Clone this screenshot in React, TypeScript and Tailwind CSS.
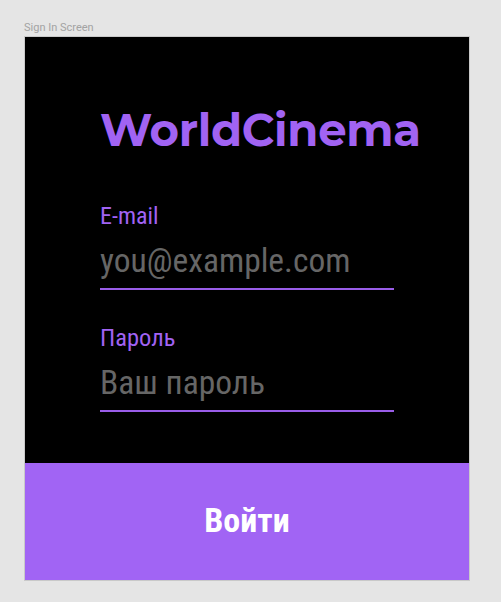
export default function App() {
  const cond = { fontFamily: '"Roboto Condensed", "Liberation Sans Narrow", Roboto, sans-serif' };
  return (
    <div className="w-[501px] h-[602px] bg-[#e5e5e5] pt-[21px] pl-[24px]" style={{ fontFamily: 'Roboto, sans-serif' }}>
      <div className="text-[11px] leading-[14px] text-[#a3a3a3] mb-[1px]">Sign In Screen</div>
      <div className="w-[446px] h-[545px] flex flex-col bg-black border border-[#c9c9c9]">
        <div className="flex-1 flex flex-col pl-[75px] pt-[65px]">
          <div
            className="text-[45px] leading-[56px] font-bold text-[#a163f3] tracking-[-0.3px]"
            style={{ fontFamily: 'Montserrat, Lato, "Open Sans", sans-serif' }}
          >
            WorldCinema
          </div>
          <div className="mt-[44px] w-[294px]" style={cond}>
            <div className="text-[24px] leading-[28px] text-[#a163f3]">E-mail</div>
            <div className="text-[33.5px] leading-[40px] text-[#666666] mt-[11px]">you@example.com</div>
            <div className="h-[2px] bg-[#9a5de8] mt-[7px]"></div>
          </div>
          <div className="mt-[34px] w-[294px]" style={cond}>
            <div className="text-[24.5px] leading-[28px] text-[#a163f3]">Пароль</div>
            <div className="text-[33.5px] leading-[40px] text-[#666666] mt-[11px]">Ваш пароль</div>
            <div className="h-[2px] bg-[#9a5de8] mt-[7px]"></div>
          </div>
        </div>
        <div className="h-[117px] bg-[#a164f4] flex items-center justify-center pb-[3px]">
          <span className="text-[34px] leading-[40px] font-bold text-white" style={cond}>Войти</span>
        </div>
      </div>
    </div>
  );
}
